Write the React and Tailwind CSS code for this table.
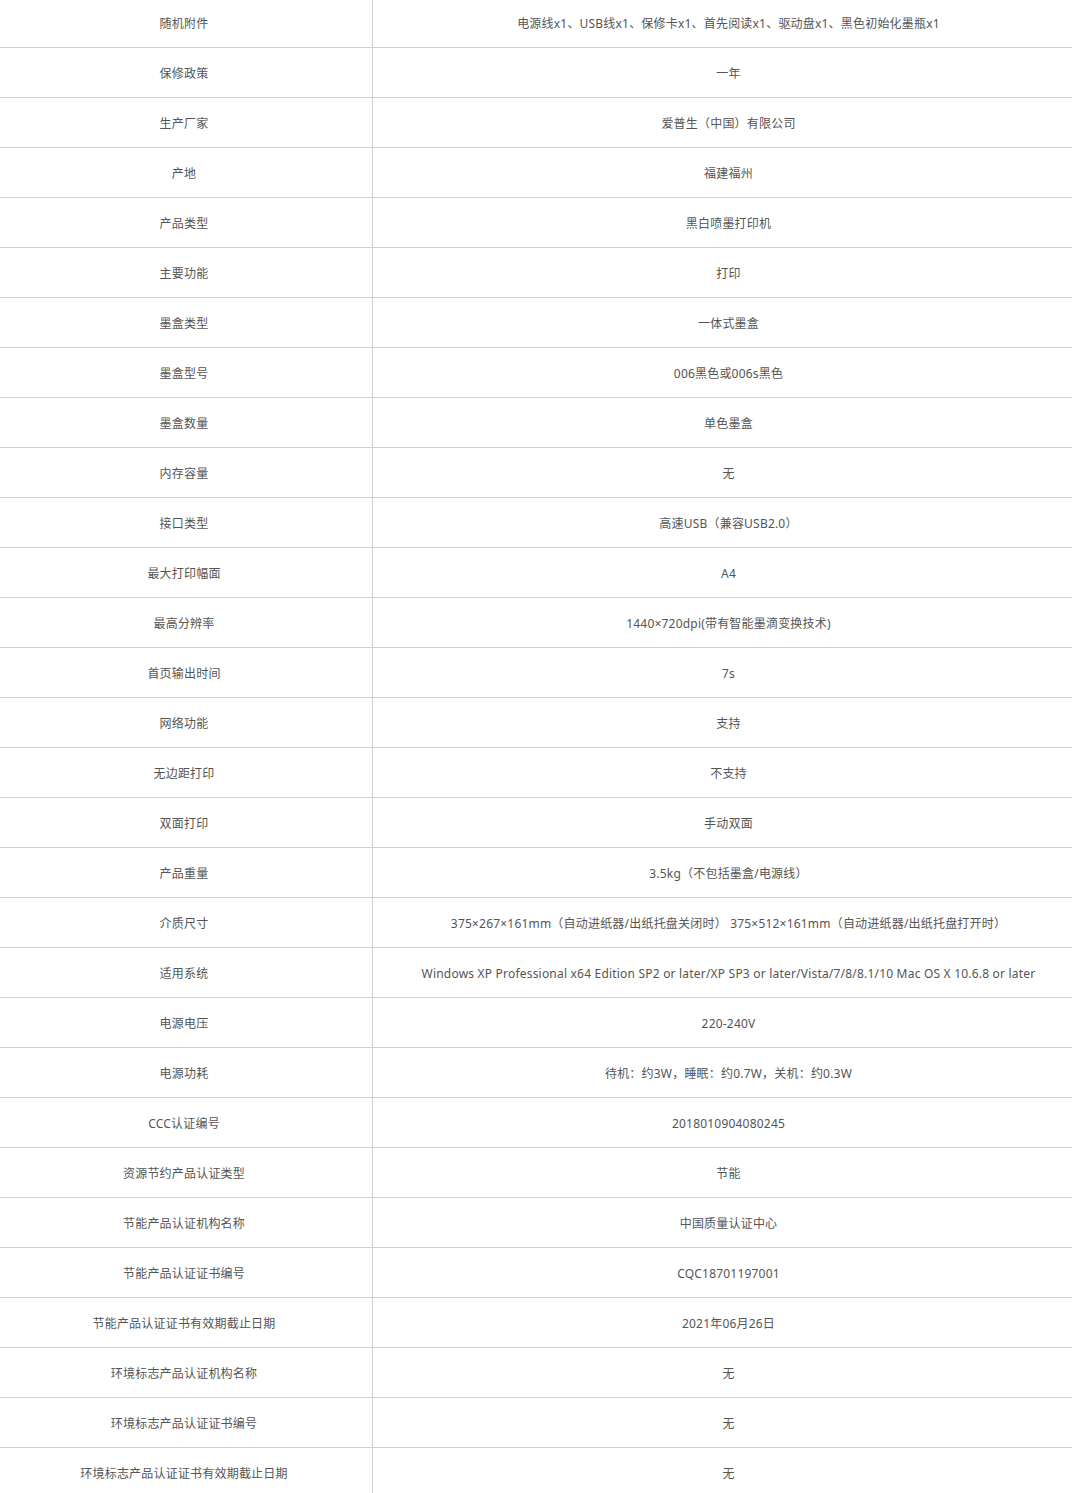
import React from 'react';

const rows = [
    ['随机附件', '电源线x1、USB线x1、保修卡x1、首先阅读x1、驱动盘x1、黑色初始化墨瓶x1'],
    ['保修政策', '一年'],
    ['生产厂家', '爱普生（中国）有限公司'],
    ['产地', '福建福州'],
    ['产品类型', '黑白喷墨打印机'],
    ['主要功能', '打印'],
    ['墨盒类型', '一体式墨盒'],
    ['墨盒型号', '006黑色或006s黑色'],
    ['墨盒数量', '单色墨盒'],
    ['内存容量', '无'],
    ['接口类型', '高速USB（兼容USB2.0）'],
    ['最大打印幅面', 'A4'],
    ['最高分辨率', '1440×720dpi(带有智能墨滴变换技术)'],
    ['首页输出时间', '7s'],
    ['网络功能', '支持'],
    ['无边距打印', '不支持'],
    ['双面打印', '手动双面'],
    ['产品重量', '3.5kg（不包括墨盒/电源线）'],
    ['介质尺寸', '375×267×161mm（自动进纸器/出纸托盘关闭时） 375×512×161mm（自动进纸器/出纸托盘打开时）'],
    ['适用系统', 'Windows XP Professional x64 Edition SP2 or later/XP SP3 or later/Vista/7/8/8.1/10 Mac OS X 10.6.8 or later'],
    ['电源电压', '220-240V'],
    ['电源功耗', '待机：约3W，睡眠：约0.7W，关机：约0.3W'],
    ['CCC认证编号', '2018010904080245'],
    ['资源节约产品认证类型', '节能'],
    ['节能产品认证机构名称', '中国质量认证中心'],
    ['节能产品认证证书编号', 'CQC18701197001'],
    ['节能产品认证证书有效期截止日期', '2021年06月26日'],
    ['环境标志产品认证机构名称', '无'],
    ['环境标志产品认证证书编号', '无'],
    ['环境标志产品认证证书有效期截止日期', '无'],
];

const App = () => {
    return (
        <div className="w-[1072px] h-[1493px] overflow-hidden bg-white">
            <div
                className="-mt-[2px] -ml-[4px] w-[1088px] text-[12px] tracking-[0.2px] text-[#555]"
                style={{ fontFamily: '"Noto Sans", "Noto Sans CJK SC", sans-serif' }}
            >
                {rows.map(([label, value]) => (
                    <div key={label} className="flex h-[50px] border-b border-[#d0d0d0]">
                        <div className="w-[377px] pt-[2px] flex items-center justify-center border-r border-[#d0d0d0]">
                            {label}
                        </div>
                        <div className="flex-1 pt-[2px] flex items-center justify-center whitespace-nowrap">
                            {value}
                        </div>
                    </div>
                ))}
            </div>
        </div>
    );
};

export default App;
